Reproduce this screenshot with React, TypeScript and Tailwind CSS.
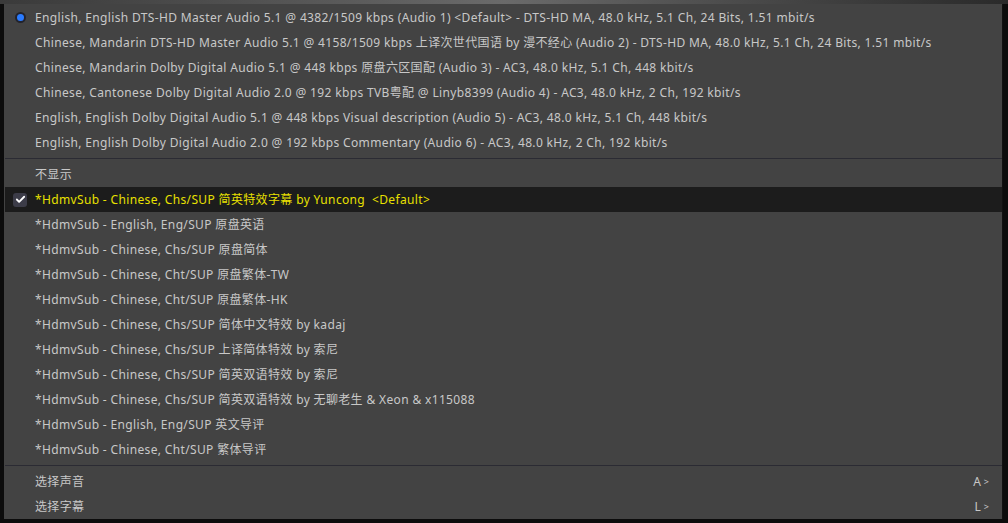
import { Check } from "lucide-react";

const audio = [
  "English, English DTS-HD Master Audio 5.1 @ 4382/1509 kbps (Audio 1) <Default> - DTS-HD MA, 48.0 kHz, 5.1 Ch, 24 Bits, 1.51 mbit/s",
  "Chinese, Mandarin DTS-HD Master Audio 5.1 @ 4158/1509 kbps 上译次世代国语 by 漫不经心 (Audio 2) - DTS-HD MA, 48.0 kHz, 5.1 Ch, 24 Bits, 1.51 mbit/s",
  "Chinese, Mandarin Dolby Digital Audio 5.1 @ 448 kbps 原盘六区国配 (Audio 3) - AC3, 48.0 kHz, 5.1 Ch, 448 kbit/s",
  "Chinese, Cantonese Dolby Digital Audio 2.0 @ 192 kbps TVB粤配 @ Linyb8399 (Audio 4) - AC3, 48.0 kHz, 2 Ch, 192 kbit/s",
  "English, English Dolby Digital Audio 5.1 @ 448 kbps Visual description (Audio 5) - AC3, 48.0 kHz, 5.1 Ch, 448 kbit/s",
  "English, English Dolby Digital Audio 2.0 @ 192 kbps Commentary (Audio 6) - AC3, 48.0 kHz, 2 Ch, 192 kbit/s",
];

const subs = [
  "*HdmvSub - English, Eng/SUP 原盘英语",
  "*HdmvSub - Chinese, Chs/SUP 原盘简体",
  "*HdmvSub - Chinese, Cht/SUP 原盘繁体-TW",
  "*HdmvSub - Chinese, Cht/SUP 原盘繁体-HK",
  "*HdmvSub - Chinese, Chs/SUP 简体中文特效 by kadaj",
  "*HdmvSub - Chinese, Chs/SUP 上译简体特效 by 索尼",
  "*HdmvSub - Chinese, Chs/SUP 简英双语特效 by 索尼",
  "*HdmvSub - Chinese, Chs/SUP 简英双语特效 by 无聊老生 & Xeon & x115088",
  "*HdmvSub - English, Eng/SUP 英文导评",
  "*HdmvSub - Chinese, Cht/SUP 繁体导评",
];

function Row({
  label,
  mark,
  active,
  shortcut,
}: {
  label: string;
  mark?: "radio" | "check";
  active?: boolean;
  shortcut?: string;
}) {
  return (
    <div
      className={`flex items-center h-[25px] pr-[13px] ${
        active ? "bg-[#1c1c1c] text-[#e8e000]" : "text-[#c8c8c8]"
      }`}
    >
      <div className="w-[30px] flex items-center justify-center shrink-0">
        {mark === "radio" && (
          <span className="w-[11px] h-[11px] rounded-full bg-[#23232c] flex items-center justify-center">
            <span className="w-[7px] h-[7px] rounded-full bg-[#2a7bff]" />
          </span>
        )}
        {mark === "check" && (
          <span className="w-[14px] h-[14px] rounded-[3px] bg-[#3c3c48] flex items-center justify-center">
            <Check size={11} strokeWidth={4} className="text-white" />
          </span>
        )}
      </div>
      <span className="whitespace-pre flex-1 tracking-[0.35px]">{label}</span>
      {shortcut && (
        <span className="flex items-center gap-[3px] text-[#c8c8c8]">
          <span>{shortcut}</span>
          <span className="text-[9px]">&gt;</span>
        </span>
      )}
    </div>
  );
}

function Separator() {
  return (
    <div className="h-[7px] pt-[3px]">
      <div className="h-px w-full bg-[#2b2b33]" />
    </div>
  );
}

export default function App() {
  return (
    <div className="w-[1008px] h-[523px] bg-[#0c0c0c] overflow-hidden">
      <div className="h-[4px] bg-gradient-to-r from-[#3a3a3a] via-[#6a6a6a] to-[#2a2a2a]" />
      <div
        className="ml-[4px] w-[999px] h-[515px] bg-[#434343] border-r border-[#111] pt-px pl-px text-[12px] leading-none"
        style={{ fontFamily: '"Noto Sans", "Noto Sans CJK SC", sans-serif' }}
      >
        {audio.map((a, i) => (
          <Row key={a} label={a} mark={i === 0 ? "radio" : undefined} />
        ))}
        <Separator />
        <Row label="不显示" />
        <Row
          label="*HdmvSub - Chinese, Chs/SUP 简英特效字幕 by Yuncong  <Default>"
          mark="check"
          active
        />
        {subs.map((s) => (
          <Row key={s} label={s} />
        ))}
        <Separator />
        <Row label="选择声音" shortcut="A" />
        <Row label="选择字幕" shortcut="L" />
      </div>
    </div>
  );
}
